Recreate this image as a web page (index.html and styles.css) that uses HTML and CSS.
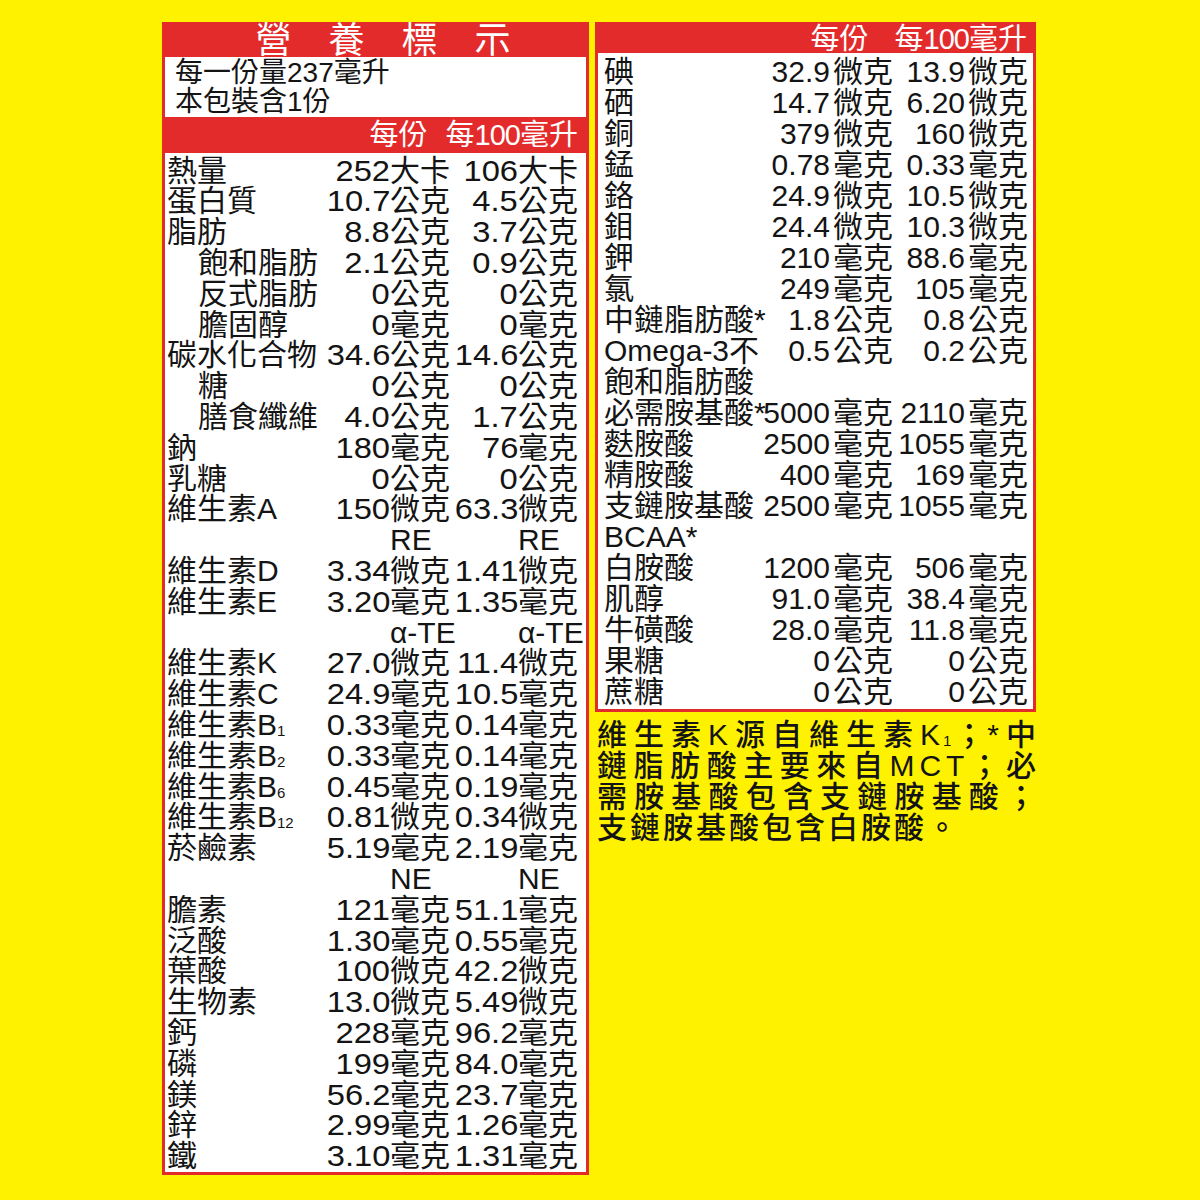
FILE: index.html
```html
<!DOCTYPE html>
<html lang="zh-Hant">
<head>
<meta charset="utf-8">
<title>營養標示</title>
<link rel="stylesheet" href="styles.css">
</head>
<body>
<div class="page">
  <section class="panel left">
    <div class="title">營養標示</div>
    <div class="serving">
      <div>每一份量237毫升</div>
      <div>本包裝含1份</div>
    </div>
    <div class="colhead"><span>每份</span><span class="h2">每<span class="hd">100</span>毫升</span></div>
    <div class="rows">
      <div class="r"><span class="l">熱量</span><span class="n"><span>252</span></span><span class="u">大卡</span><span class="n"><span>106</span></span><span class="u">大卡</span></div>
      <div class="r"><span class="l">蛋白質</span><span class="n"><span>10.7</span></span><span class="u">公克</span><span class="n"><span>4.5</span></span><span class="u">公克</span></div>
      <div class="r"><span class="l">脂肪</span><span class="n"><span>8.8</span></span><span class="u">公克</span><span class="n"><span>3.7</span></span><span class="u">公克</span></div>
      <div class="r"><span class="l in">飽和脂肪</span><span class="n"><span>2.1</span></span><span class="u">公克</span><span class="n"><span>0.9</span></span><span class="u">公克</span></div>
      <div class="r"><span class="l in">反式脂肪</span><span class="n"><span>0</span></span><span class="u">公克</span><span class="n"><span>0</span></span><span class="u">公克</span></div>
      <div class="r"><span class="l in">膽固醇</span><span class="n"><span>0</span></span><span class="u">毫克</span><span class="n"><span>0</span></span><span class="u">毫克</span></div>
      <div class="r"><span class="l">碳水化合物</span><span class="n"><span>34.6</span></span><span class="u">公克</span><span class="n"><span>14.6</span></span><span class="u">公克</span></div>
      <div class="r"><span class="l in">糖</span><span class="n"><span>0</span></span><span class="u">公克</span><span class="n"><span>0</span></span><span class="u">公克</span></div>
      <div class="r"><span class="l in">膳食纖維</span><span class="n"><span>4.0</span></span><span class="u">公克</span><span class="n"><span>1.7</span></span><span class="u">公克</span></div>
      <div class="r"><span class="l">鈉</span><span class="n"><span>180</span></span><span class="u">毫克</span><span class="n"><span>76</span></span><span class="u">毫克</span></div>
      <div class="r"><span class="l">乳糖</span><span class="n"><span>0</span></span><span class="u">公克</span><span class="n"><span>0</span></span><span class="u">公克</span></div>
      <div class="r"><span class="l">維生素A</span><span class="n"><span>150</span></span><span class="u">微克</span><span class="n"><span>63.3</span></span><span class="u">微克</span></div>
      <div class="r"><span class="l"></span><span class="n"></span><span class="u">RE</span><span class="n"></span><span class="u">RE</span></div>
      <div class="r"><span class="l">維生素D</span><span class="n"><span>3.34</span></span><span class="u">微克</span><span class="n"><span>1.41</span></span><span class="u">微克</span></div>
      <div class="r"><span class="l">維生素E</span><span class="n"><span>3.20</span></span><span class="u">毫克</span><span class="n"><span>1.35</span></span><span class="u">毫克</span></div>
      <div class="r"><span class="l"></span><span class="n"></span><span class="u">α-TE</span><span class="n"></span><span class="u">α-TE</span></div>
      <div class="r"><span class="l">維生素K</span><span class="n"><span>27.0</span></span><span class="u">微克</span><span class="n"><span>11.4</span></span><span class="u">微克</span></div>
      <div class="r"><span class="l">維生素C</span><span class="n"><span>24.9</span></span><span class="u">毫克</span><span class="n"><span>10.5</span></span><span class="u">毫克</span></div>
      <div class="r"><span class="l">維生素B<span class="sub">1</span></span><span class="n"><span>0.33</span></span><span class="u">毫克</span><span class="n"><span>0.14</span></span><span class="u">毫克</span></div>
      <div class="r"><span class="l">維生素B<span class="sub">2</span></span><span class="n"><span>0.33</span></span><span class="u">毫克</span><span class="n"><span>0.14</span></span><span class="u">毫克</span></div>
      <div class="r"><span class="l">維生素B<span class="sub">6</span></span><span class="n"><span>0.45</span></span><span class="u">毫克</span><span class="n"><span>0.19</span></span><span class="u">毫克</span></div>
      <div class="r"><span class="l">維生素B<span class="sub">12</span></span><span class="n"><span>0.81</span></span><span class="u">微克</span><span class="n"><span>0.34</span></span><span class="u">微克</span></div>
      <div class="r"><span class="l">菸鹼素</span><span class="n"><span>5.19</span></span><span class="u">毫克</span><span class="n"><span>2.19</span></span><span class="u">毫克</span></div>
      <div class="r"><span class="l"></span><span class="n"></span><span class="u">NE</span><span class="n"></span><span class="u">NE</span></div>
      <div class="r"><span class="l">膽素</span><span class="n"><span>121</span></span><span class="u">毫克</span><span class="n"><span>51.1</span></span><span class="u">毫克</span></div>
      <div class="r"><span class="l">泛酸</span><span class="n"><span>1.30</span></span><span class="u">毫克</span><span class="n"><span>0.55</span></span><span class="u">毫克</span></div>
      <div class="r"><span class="l">葉酸</span><span class="n"><span>100</span></span><span class="u">微克</span><span class="n"><span>42.2</span></span><span class="u">微克</span></div>
      <div class="r"><span class="l">生物素</span><span class="n"><span>13.0</span></span><span class="u">微克</span><span class="n"><span>5.49</span></span><span class="u">微克</span></div>
      <div class="r"><span class="l">鈣</span><span class="n"><span>228</span></span><span class="u">毫克</span><span class="n"><span>96.2</span></span><span class="u">毫克</span></div>
      <div class="r"><span class="l">磷</span><span class="n"><span>199</span></span><span class="u">毫克</span><span class="n"><span>84.0</span></span><span class="u">毫克</span></div>
      <div class="r"><span class="l">鎂</span><span class="n"><span>56.2</span></span><span class="u">毫克</span><span class="n"><span>23.7</span></span><span class="u">毫克</span></div>
      <div class="r"><span class="l">鋅</span><span class="n"><span>2.99</span></span><span class="u">毫克</span><span class="n"><span>1.26</span></span><span class="u">毫克</span></div>
      <div class="r"><span class="l">鐵</span><span class="n"><span>3.10</span></span><span class="u">毫克</span><span class="n"><span>1.31</span></span><span class="u">毫克</span></div>
    </div>
  </section>

  <div class="rcol">
    <section class="panel right">
      <div class="colhead"><span>每份</span><span class="h2">每<span class="hd">100</span>毫升</span></div>
      <div class="rows">
        <div class="r"><span class="l">碘</span><span class="n">32.9</span><span class="u">微克</span><span class="n">13.9</span><span class="u">微克</span></div>
        <div class="r"><span class="l">硒</span><span class="n">14.7</span><span class="u">微克</span><span class="n">6.20</span><span class="u">微克</span></div>
        <div class="r"><span class="l">銅</span><span class="n">379</span><span class="u">微克</span><span class="n">160</span><span class="u">微克</span></div>
        <div class="r"><span class="l">錳</span><span class="n">0.78</span><span class="u">毫克</span><span class="n">0.33</span><span class="u">毫克</span></div>
        <div class="r"><span class="l">鉻</span><span class="n">24.9</span><span class="u">微克</span><span class="n">10.5</span><span class="u">微克</span></div>
        <div class="r"><span class="l">鉬</span><span class="n">24.4</span><span class="u">微克</span><span class="n">10.3</span><span class="u">微克</span></div>
        <div class="r"><span class="l">鉀</span><span class="n">210</span><span class="u">毫克</span><span class="n">88.6</span><span class="u">毫克</span></div>
        <div class="r"><span class="l">氯</span><span class="n">249</span><span class="u">毫克</span><span class="n">105</span><span class="u">毫克</span></div>
        <div class="r"><span class="l">中鏈脂肪酸*</span><span class="n">1.8</span><span class="u">公克</span><span class="n">0.8</span><span class="u">公克</span></div>
        <div class="r"><span class="l">Omega-3不</span><span class="n">0.5</span><span class="u">公克</span><span class="n">0.2</span><span class="u">公克</span></div>
        <div class="r"><span class="l">飽和脂肪酸</span></div>
        <div class="r"><span class="l">必需胺基酸*</span><span class="n">5000</span><span class="u">毫克</span><span class="n">2110</span><span class="u">毫克</span></div>
        <div class="r"><span class="l">麩胺酸</span><span class="n">2500</span><span class="u">毫克</span><span class="n">1055</span><span class="u">毫克</span></div>
        <div class="r"><span class="l">精胺酸</span><span class="n">400</span><span class="u">毫克</span><span class="n">169</span><span class="u">毫克</span></div>
        <div class="r"><span class="l">支鏈胺基酸</span><span class="n">2500</span><span class="u">毫克</span><span class="n">1055</span><span class="u">毫克</span></div>
        <div class="r"><span class="l">BCAA*</span></div>
        <div class="r"><span class="l">白胺酸</span><span class="n">1200</span><span class="u">毫克</span><span class="n">506</span><span class="u">毫克</span></div>
        <div class="r"><span class="l">肌醇</span><span class="n">91.0</span><span class="u">毫克</span><span class="n">38.4</span><span class="u">毫克</span></div>
        <div class="r"><span class="l">牛磺酸</span><span class="n">28.0</span><span class="u">毫克</span><span class="n">11.8</span><span class="u">毫克</span></div>
        <div class="r"><span class="l">果糖</span><span class="n">0</span><span class="u">公克</span><span class="n">0</span><span class="u">公克</span></div>
        <div class="r"><span class="l">蔗糖</span><span class="n">0</span><span class="u">公克</span><span class="n">0</span><span class="u">公克</span></div>
      </div>
    </section>
    <div class="note">
      <div class="nl">維生素K源自維生素K<span class="sub">1</span>；*中</div>
      <div class="nl">鏈脂肪酸主要來自<span class="lat">MCT</span>；必</div>
      <div class="nl">需胺基酸包含支鏈胺基酸；</div>
      <div class="nl last">支鏈胺基酸包含白胺酸。</div>
    </div>
  </div>
</div>
</body>
</html>
```
FILE: styles.css
```css
* { box-sizing: border-box; }

body {
  margin: 0;
  background: #fff200;
  color: #141414;
  font-family: "Liberation Sans", "Noto Sans CJK TC", sans-serif;
}

.page {
  display: flex;
  align-items: flex-start;
  gap: 6px;
  padding: 22px 0 0 162px;
}

.panel {
  background: #fff;
  border: 3px solid #e32b2c;
}

.left { width: 427px; }

.rcol {
  width: 441px;
  display: flex;
  flex-direction: column;
}

.title {
  background: #e32b2c;
  color: #fff;
  height: 32px;
  line-height: 32px;
  font-size: 36px;
  letter-spacing: 37px;
  text-align: center;
  padding-left: 52px;
  white-space: nowrap;
}

.serving {
  height: 60px;
  padding: 2px 0 0 10px;
  font-size: 28px;
  line-height: 28.5px;
}

.colhead {
  background: #e32b2c;
  color: #fff;
  text-align: right;
  font-size: 29px;
  white-space: nowrap;
}
.left .colhead { height: 36px; line-height: 36px; padding-right: 8px; }
.right .colhead { height: 28px; line-height: 28px; padding-right: 6px; }
.colhead .h2 { margin-left: 18px; }
.right .colhead .h2 { margin-left: 26px; }
.colhead .hd { letter-spacing: -1px; }

.left .rows { padding: 2.6px 6px 0 2px; }
.right .rows { padding: 2.5px 5px 2.5px 6px; }

.r {
  display: grid;
  font-size: 30px;
  white-space: nowrap;
}
.left .r {
  grid-template-columns: minmax(0, 1fr) 68px 62px 66px 62px;
  height: 30.8px;
  line-height: 30.8px;
}
.right .r {
  grid-template-columns: minmax(0, 1fr) 70px 63px 72px 63px;
  height: 31px;
  line-height: 31px;
}

.l { overflow: visible; }
.in { padding-left: 31px; }
.n { text-align: right; }
.left .n > span {
  display: inline-block;
  transform: scaleX(1.09);
  transform-origin: right center;
}
.right .u { padding-left: 3px; }

.sub {
  font-size: 15px;
  line-height: 0;
  vertical-align: -1px;
}

.note {
  margin-top: 7px;
  margin-right: -3px;
  padding-left: 2px;
  font-size: 30px;
  font-weight: 500;
  line-height: 31px;
  letter-spacing: 3px;
}
.nl {
  text-align: justify;
  text-align-last: justify;
  white-space: nowrap;
}
.nl.last {
  text-align: left;
  text-align-last: left;
}
.lat { letter-spacing: 5px; }
```
